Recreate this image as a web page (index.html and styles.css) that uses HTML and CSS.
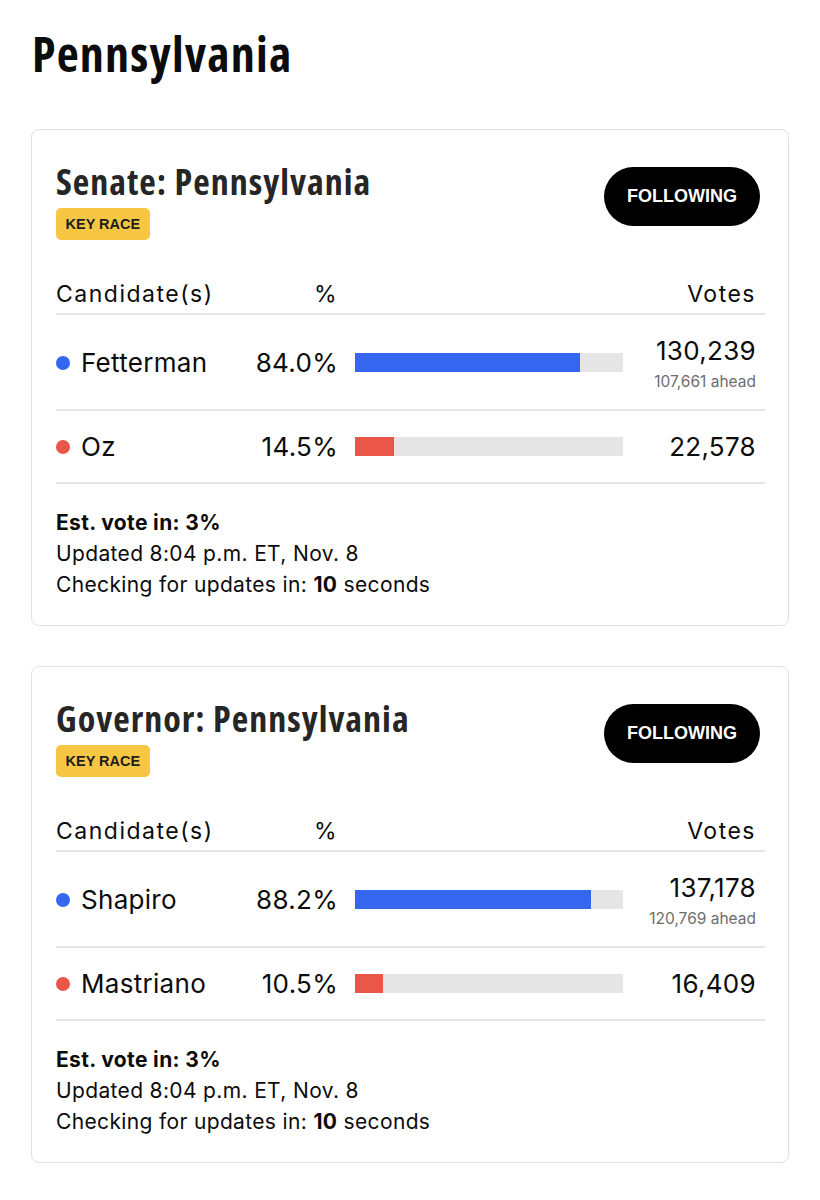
FILE: index.html
```html
<!DOCTYPE html>
<html lang="en">
<head>
<meta charset="utf-8">
<title>Pennsylvania</title>
<link rel="stylesheet" href="styles.css">
</head>
<body>
<main class="page">
  <h1 class="state-title">Pennsylvania</h1>

  <section class="race-card">
    <header class="race-head">
      <div class="race-title-wrap">
        <h2 class="race-title">Senate: Pennsylvania</h2>
        <span class="key-badge">KEY RACE</span>
      </div>
      <button class="follow-btn" type="button">FOLLOWING</button>
    </header>

    <div class="results">
      <div class="results-row results-head">
        <span class="col-name">Candidate(s)</span>
        <span class="col-pct">%</span>
        <span class="col-bar"></span>
        <span class="col-votes">Votes</span>
      </div>
      <div class="results-row leader">
        <span class="col-name"><i class="dot dem"></i>Fetterman</span>
        <span class="col-pct">84.0%</span>
        <span class="col-bar"><span class="bar"><span class="bar-fill dem" style="width:84%"></span></span></span>
        <span class="col-votes"><span class="votes">130,239</span><span class="ahead">107,661 ahead</span></span>
      </div>
      <div class="results-row">
        <span class="col-name"><i class="dot rep"></i>Oz</span>
        <span class="col-pct">14.5%</span>
        <span class="col-bar"><span class="bar"><span class="bar-fill rep" style="width:14.5%"></span></span></span>
        <span class="col-votes"><span class="votes">22,578</span></span>
      </div>
    </div>

    <div class="race-foot">
      <p class="est">Est. vote in: 3%</p>
      <p>Updated 8:04 p.m. ET, Nov. 8</p>
      <p>Checking for updates in: <b>10</b> seconds</p>
    </div>
  </section>

  <section class="race-card">
    <header class="race-head">
      <div class="race-title-wrap">
        <h2 class="race-title">Governor: Pennsylvania</h2>
        <span class="key-badge">KEY RACE</span>
      </div>
      <button class="follow-btn" type="button">FOLLOWING</button>
    </header>

    <div class="results">
      <div class="results-row results-head">
        <span class="col-name">Candidate(s)</span>
        <span class="col-pct">%</span>
        <span class="col-bar"></span>
        <span class="col-votes">Votes</span>
      </div>
      <div class="results-row leader">
        <span class="col-name"><i class="dot dem"></i>Shapiro</span>
        <span class="col-pct">88.2%</span>
        <span class="col-bar"><span class="bar"><span class="bar-fill dem" style="width:88.2%"></span></span></span>
        <span class="col-votes"><span class="votes">137,178</span><span class="ahead">120,769 ahead</span></span>
      </div>
      <div class="results-row">
        <span class="col-name"><i class="dot rep"></i>Mastriano</span>
        <span class="col-pct">10.5%</span>
        <span class="col-bar"><span class="bar"><span class="bar-fill rep" style="width:10.5%"></span></span></span>
        <span class="col-votes"><span class="votes">16,409</span></span>
      </div>
    </div>

    <div class="race-foot">
      <p class="est">Est. vote in: 3%</p>
      <p>Updated 8:04 p.m. ET, Nov. 8</p>
      <p>Checking for updates in: <b>10</b> seconds</p>
    </div>
  </section>
</main>
</body>
</html>
```

FILE: styles.css
```css
* { box-sizing: border-box; }

html, body {
  margin: 0;
  padding: 0;
  background: #ffffff;
}

body {
  font-family: Inter, "Liberation Sans", Arial, sans-serif;
  color: #0c0c0c;
}

.page {
  padding: 30px 31px 0 31px;
}

/* condensed display face for headings */
.state-title,
.race-title {
  font-family: "Open Sans", "DejaVu Sans Condensed", sans-serif;
  font-stretch: 75%;
  font-weight: 700;
}

.state-title {
  margin: 0 0 51px 1px;
  font-size: 48px;
  line-height: 48px;
  letter-spacing: 1.2px;
  color: #0c0c0c;
}

/* ---- race card ---- */
.race-card {
  border: 1px solid #e1e1e1;
  border-radius: 8px;
  padding: 32px 23px 25px 24px;
  margin-bottom: 40px;
  background: #fff;
}

.race-head {
  display: flex;
  justify-content: space-between;
  align-items: flex-start;
}

.race-title-wrap {
  display: flex;
  flex-direction: column;
  align-items: flex-start;
}

.race-title {
  margin: 0;
  font-size: 36px;
  line-height: 40px;
  letter-spacing: 1px;
  color: #262626;
}

.key-badge {
  margin-top: 6px;
  background: #f6c644;
  color: #1e1e1e;
  border-radius: 5px;
  padding: 0 9.5px;
  height: 32px;
  line-height: 32px;
  font-family: "Liberation Sans", Arial, sans-serif;
  font-weight: 700;
  font-size: 14.5px;
}

.follow-btn {
  margin: 5px 5px 0 0;
  height: 59px;
  width: 156px;
  border: 0;
  border-radius: 30px;
  background: #000;
  color: #fff;
  font-family: "Liberation Sans", Arial, sans-serif;
  font-weight: 700;
  font-size: 18px;
  padding: 0;
}

/* ---- results table ---- */
.results {
  margin-top: 40px;
}

.results-row {
  display: grid;
  grid-template-columns: 190px 92px 285px 1fr;
  align-items: center;
  border-bottom: 2px solid #e6e6e6;
  padding: 20px 0;
  font-size: 26px;
  line-height: 31px;
  letter-spacing: 0.3px;
}

.results-row.leader {
  padding-bottom: 19px;
}

.results-head {
  padding: 0 0 5px 0;
  font-size: 23px;
  line-height: 28px;
  letter-spacing: 1.5px;
}

.col-name {
  display: flex;
  align-items: center;
}

.col-pct {
  text-align: right;
}

.col-bar {
  padding-left: 17px;
}

.col-votes {
  display: flex;
  flex-direction: column;
  align-items: flex-end;
  padding-right: 9px;
  text-align: right;
}

.dot {
  width: 14px;
  height: 14px;
  border-radius: 50%;
  margin-right: 11px;
  flex: none;
}

.dem { background: #3566ef; }
.rep { background: #ea5749; }

.bar {
  display: block;
  height: 19px;
  background: #e5e5e5;
}

.bar-fill {
  display: block;
  height: 100%;
}

.ahead {
  margin-top: 7px;
  font-size: 15.5px;
  line-height: 17px;
  letter-spacing: 0;
  color: #6d6d6d;
}

/* ---- footer ---- */
.race-foot {
  padding-top: 23px;
  font-size: 21px;
  line-height: 31px;
  letter-spacing: 0.35px;
}

.race-foot p {
  margin: 0;
}

.race-foot .est,
.race-foot b {
  font-weight: 700;
}
```
